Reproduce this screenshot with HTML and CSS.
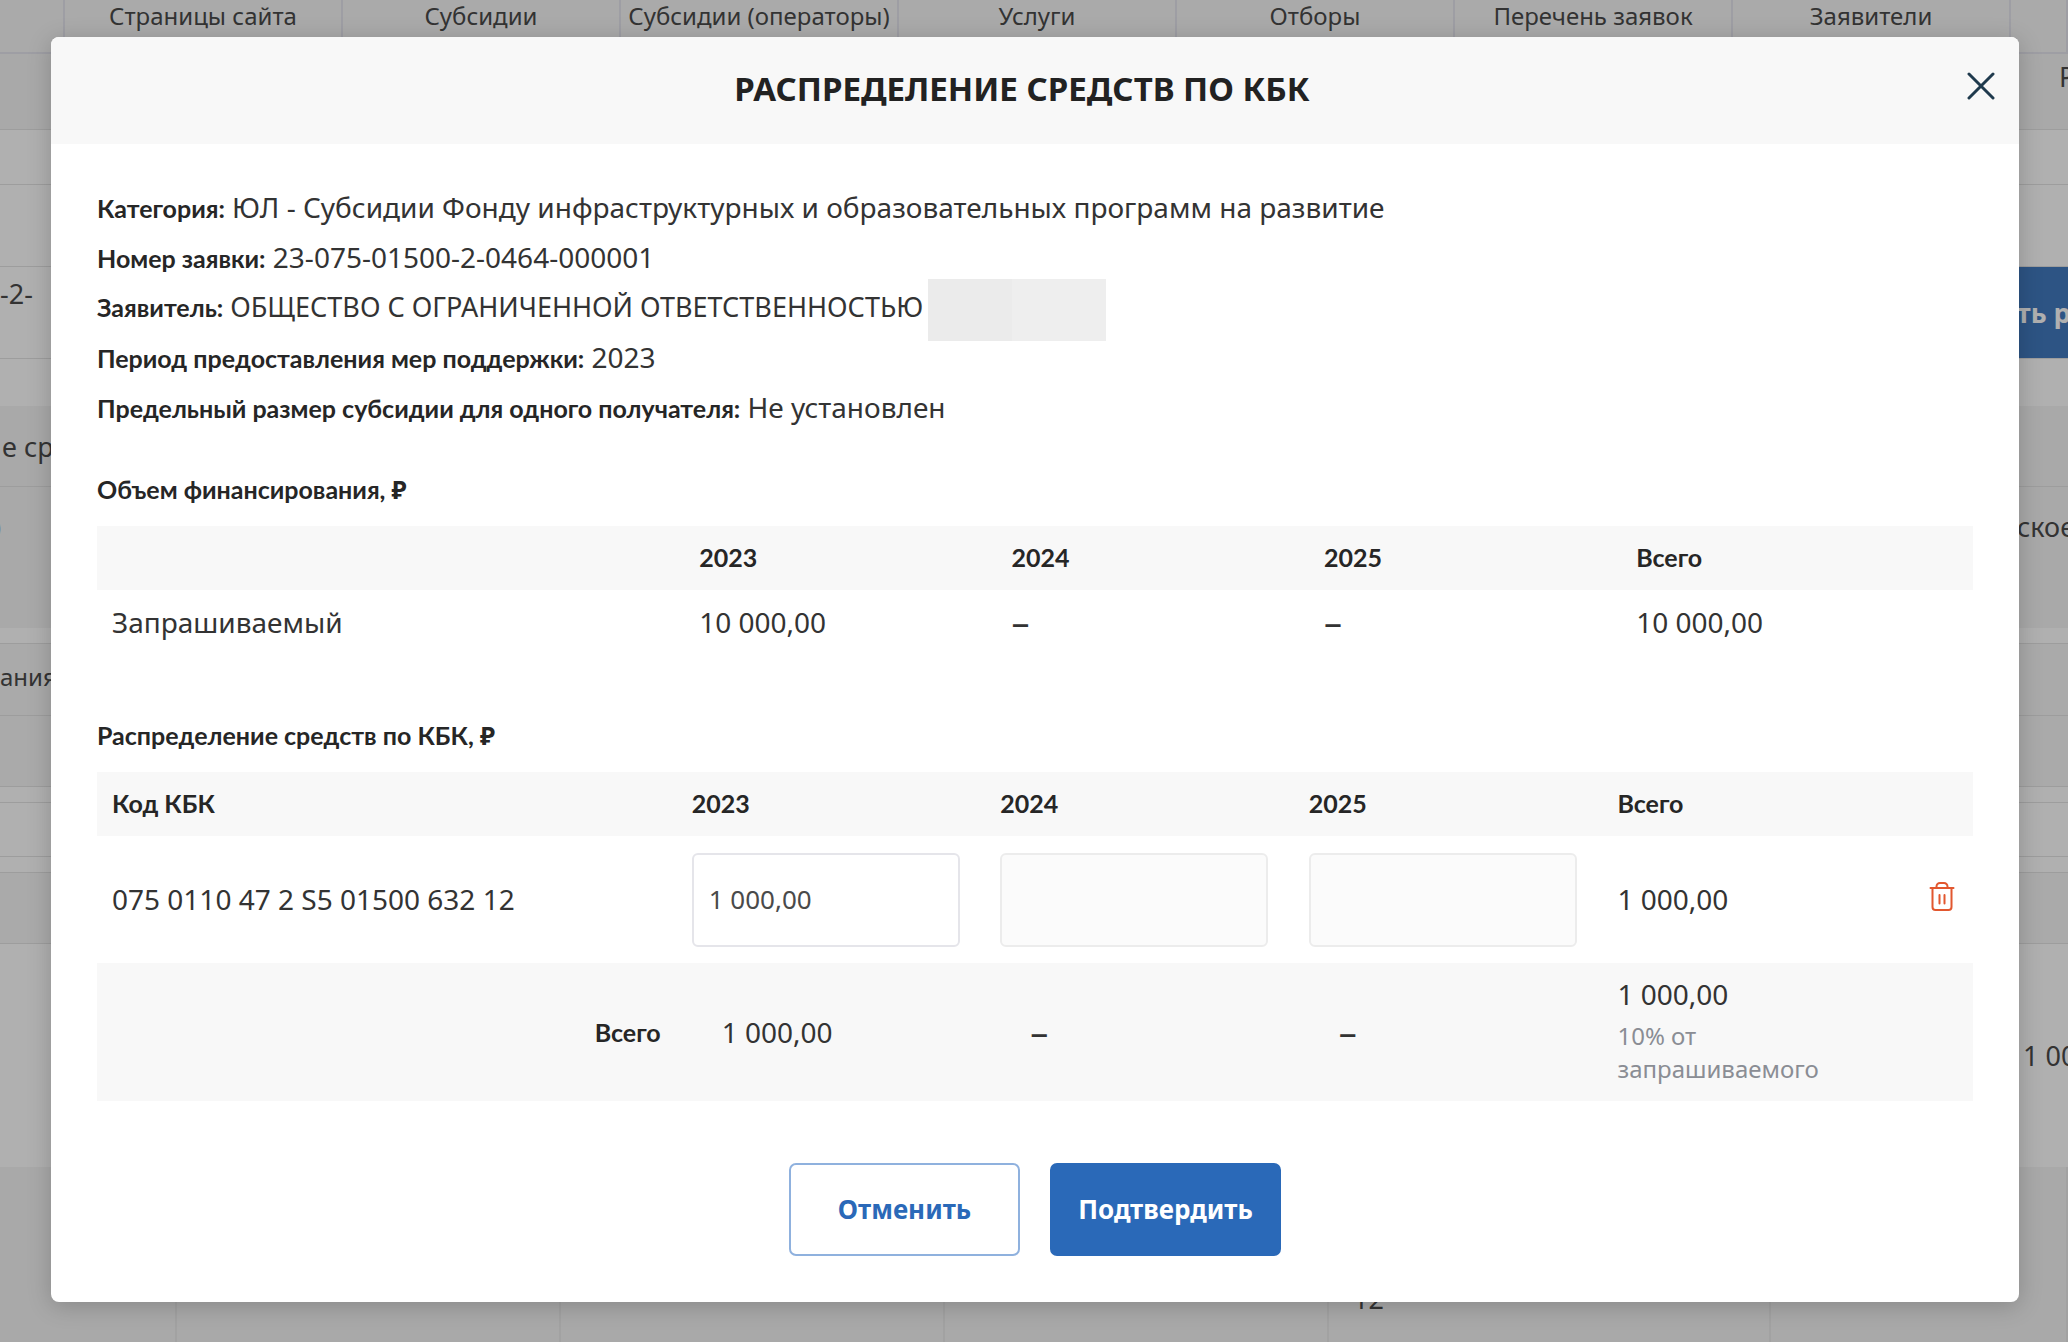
FILE: index.html
```html
<!DOCTYPE html>
<html lang="ru">
<head>
<meta charset="utf-8">
<meta name="viewport" content="width=device-width, initial-scale=1">
<title>Распределение средств по КБК</title>
<link rel="stylesheet" href="styles.css">
</head>
<body>
<div class="page" aria-hidden="true">
  <nav class="nav">
    <span class="nav-cell"></span>
    <span class="nav-cell">Страницы сайта</span>
    <span class="nav-cell">Субсидии</span>
    <span class="nav-cell">Субсидии (операторы)</span>
    <span class="nav-cell">Услуги</span>
    <span class="nav-cell">Отборы</span>
    <span class="nav-cell">Перечень заявок</span>
    <span class="nav-cell">Заявители</span>
    <span class="nav-cell"></span>
  </nav>
  <div class="band band-subnav"><span></span><span class="edge edge-far">Р</span></div>
  <div class="band band-thin"></div>
  <div class="band band-filter"></div>
  <div class="band band-record"><span class="cut">-2-</span><span class="edge edge-action">ть р</span></div>
  <div class="band band-gap"></div>
  <div class="band band-head"><span class="cut cut-in">е ср</span></div>
  <div class="band band-detail"><span class="cut cut-out">)</span><span class="edge">ское</span></div>
  <div class="band band-space"></div>
  <div class="band band-title"><span class="cut">ания</span></div>
  <div class="band band-sub"></div>
  <div class="band band-space"></div>
  <div class="band band-row"></div>
  <div class="band band-space"></div>
  <div class="band band-sub"></div>
  <div class="band band-sum"><span></span><span class="edge edge-in">1 00</span></div>
  <div class="foot">
    <span class="foot-cell"></span><span class="foot-cell"></span><span class="foot-cell"></span><span class="foot-cell"></span><span class="foot-cell">12</span><span class="foot-cell"></span>
  </div>
</div>

<div class="overlay">
  <section class="modal" role="dialog" aria-modal="true" aria-labelledby="modal-title">
    <header class="modal-head">
      <h1 class="modal-title" id="modal-title">РАСПРЕДЕЛЕНИЕ СРЕДСТВ ПО КБК</h1>
      <button class="icon-button close" type="button" aria-label="Закрыть">
        <svg width="28" height="28" viewBox="0 0 28 28" fill="none" stroke="#1f3a4d" stroke-width="3" stroke-linecap="round"><path d="M2 2 26 26M26 2 2 26"/></svg>
      </button>
    </header>

    <div class="modal-body">
      <div class="info">
        <p class="info-line"><b>Категория:</b> ЮЛ - Субсидии Фонду инфраструктурных и образовательных программ на развитие</p>
        <p class="info-line"><b>Номер заявки:</b> 23-075-01500-2-0464-000001</p>
        <p class="info-line info-flex"><span><b>Заявитель:</b> ОБЩЕСТВО С ОГРАНИЧЕННОЙ ОТВЕТСТВЕННОСТЬЮ</span><span class="redacted"></span></p>
        <p class="info-line"><b>Период предоставления мер поддержки:</b> 2023</p>
        <p class="info-line"><b>Предельный размер субсидии для одного получателя:</b> Не установлен</p>
      </div>

      <h2 class="section-title">Объем финансирования, ₽</h2>
      <table class="grid">
        <colgroup><col class="fund-name"><col class="fund-year"><col class="fund-year"><col class="fund-year"><col></colgroup>
        <thead><tr><td></td><th>2023</th><th>2024</th><th>2025</th><th>Всего</th></tr></thead>
        <tbody><tr><td>Запрашиваемый</td><td>10 000,00</td><td class="dash">–</td><td class="dash">–</td><td>10 000,00</td></tr></tbody>
      </table>

      <h2 class="section-title section-next">Распределение средств по КБК, ₽</h2>
      <table class="grid">
        <colgroup><col class="code-name"><col class="code-sum"><col class="code-sum"><col class="code-sum"><col class="code-sum"><col></colgroup>
        <thead><tr><th>Код КБК</th><th>2023</th><th>2024</th><th>2025</th><th>Всего</th><td></td></tr></thead>
        <tbody>
          <tr class="entry">
            <td>075 0110 47 2 S5 01500 632 12</td>
            <td><input class="amount" type="text" aria-label="Сумма на 2023" value="1 000,00"></td>
            <td><input class="amount" type="text" aria-label="Сумма на 2024" disabled></td>
            <td><input class="amount" type="text" aria-label="Сумма на 2025" disabled></td>
            <td>1 000,00</td>
            <td class="action">
              <button class="icon-button" type="button" aria-label="Удалить">
                <svg width="26" height="30" viewBox="0 0 26 30" fill="none" stroke="#e2572f" stroke-width="2" stroke-linecap="round" stroke-linejoin="round"><path d="M1.5 7h23M3.5 7v19a3 3 0 0 0 3 3h13a3 3 0 0 0 3-3V7M7.500 7V5.500A3.500 3.500 0 0 1 11 2h4a3.500 3.500 0 0 1 3.500 3.500V7M10.500 14v8.500M15.500 14v8.500"/></svg>
              </button>
            </td>
          </tr>
        </tbody>
        <tfoot>
          <tr>
            <th class="total-label">Всего</th>
            <td class="total">1 000,00</td>
            <td class="total dash">–</td>
            <td class="total dash">–</td>
            <td class="share">1 000,00<span class="note">10% от запрашиваемого</span></td>
            <td></td>
          </tr>
        </tfoot>
      </table>

      <div class="buttons">
        <button class="button" type="button">Отменить</button>
        <button class="button button-primary" type="button">Подтвердить</button>
      </div>
    </div>
  </section>
</div>
</body>
</html>
```
FILE: styles.css
```css
* { box-sizing: border-box; }

body {
  margin: 0;
  display: grid;
  min-height: 100vh;
  overflow: hidden;
  font-family: "Noto Sans", sans-serif;
  font-size: 28px;
  color: #333;
  background: #f3f3f3;
}

/* Page behind the dialog */
.page, .overlay { grid-area: 1 / 1; min-width: 0; }

.page { font-size: 24px; overflow: hidden; }

.nav {
  display: grid;
  grid-template-columns: 65px repeat(7, 278px) 1fr;
  height: 54px;
  background: #f6f6f6;
  border-bottom: 2px solid #e2e2ec;
}
.nav-cell {
  border-right: 2px solid #e2e2ec;
  line-height: 32px;
  text-align: center;
  white-space: nowrap;
}

.band {
  display: flex;
  justify-content: space-between;
  align-items: center;
  border-bottom: 1px solid #e0e0e0;
  background: #fff;
  font-size: 27px;
  white-space: nowrap;
}
.cut { width: 51px; }
.cut-in { padding-left: 2px; }
.cut-out { text-indent: -7px; }
.edge { width: 51px; }
.edge-far { padding-left: 42px; }
.edge-in { padding-left: 6px; }
.edge-action {
  align-self: stretch;
  line-height: 91px;
  font-weight: 700;
  color: #fff;
  background: #2a69b8;
}
.band-subnav { height: 76px; align-items: start; line-height: 46px; background: #f3f3f3; }
.band-thin { height: 55px; }
.band-filter { height: 82px; }
.band-record { height: 92px; line-height: 54px; align-items: start; }
.band-gap { height: 47px; border: 0; }
.band-head { height: 81px; background: #f3f3f3; }
.band-detail { height: 141px; border: 0; align-items: start; line-height: 80px; background: #f3f3f3; }
.band-space { height: 16px; }
.band-title { height: 72px; align-items: start; line-height: 66px; font-size: 24px; background: #f6f6f6; }
.band-sub { height: 71px; background: #f6f6f6; }
.band-row { height: 54px; }
.band-sum { height: 223px; border: 0; background: #fff; }

.foot { display: grid; grid-template-columns: 177px 384px 384px 384px 442px 1fr; height: 176px; }
.foot-cell { padding: 112px 24px 0; border-right: 2px solid #e8e8e8; font-size: 27px; line-height: 40px; }

/* Dialog */
.overlay {
  z-index: 1;
  display: flex;
  align-items: flex-start;
  padding: 37px 49px 40px 51px;
  background: rgba(51, 51, 51, 0.39);
}
.modal {
  flex: 1;
  min-width: 0;
  overflow: hidden;
  border-radius: 8px;
  background: #fff;
  box-shadow: 0 4px 24px rgba(0, 0, 0, 0.2);
}
.modal-head {
  display: grid;
  grid-template-columns: 60px 1fr 86px;
  align-items: center;
  height: 107px;
  padding-bottom: 4px;
  background: #f8f8f8;
}
.modal-title {
  grid-column: 2;
  margin: 0;
  font-size: 33px;
  line-height: 40px;
  text-align: center;
  color: #222;
}
.icon-button { display: block; padding: 0; border: 0; background: none; cursor: pointer; }
.icon-button svg { display: block; }
.close { margin-bottom: 5px; margin-left: 34px; }

.modal-body { padding: 38px 46px 46px; }

.info-line { margin: 0; line-height: 50px; }
.info-line b, .section-title, .grid th {
  font-family: Lato, "Noto Sans", sans-serif;
  font-size: 25px;
  font-weight: 700;
  color: #262626;
}
.info-line b { line-height: 1; }
.info-flex { display: flex; align-items: center; gap: 5px; height: 50px; font-size: 27px; }
.redacted {
  flex: none;
  width: 178px;
  height: 62px;
  margin-top: 5px;
  background: linear-gradient(to right, #ebebeb 47%, #eee 47%);
}

.section-title { margin: 39px 0 19px; line-height: 36px; }
.section-next { margin-top: 63px; }

.grid { width: 100%; table-layout: fixed; border-collapse: collapse; }
.grid th, .grid td { padding: 0 15px; line-height: 40px; text-align: left; }
.grid thead th { padding-bottom: 2px; }
.grid thead tr { height: 64px; background: #f8f8f8; }
.grid tbody tr { height: 64px; }
.fund-name { width: 31.3%; }
.fund-year { width: 16.65%; }
.code-name { width: 30.9%; }
.code-sum { width: 16.45%; }
.grid .dash { font-size: 36px; }

.grid .entry { height: 127px; }
.amount {
  display: block;
  width: 268px;
  max-width: 100%;
  height: 94px;
  padding: 0 15px 2px;
  border: 2px solid #e5e5ea;
  border-radius: 6px;
  background: #fff;
  font: inherit;
  font-size: 26px;
  color: #4a4a4a;
}
.amount:disabled { border-color: #ececec; background: #fbfbfb; }
.grid .entry td { padding-bottom: 2px; }
.grid .entry td:has(.amount) { padding: 0 0 0 15px; }
.grid .entry .action { padding: 0 0 8px 18px; }

.grid tfoot tr { height: 138px; background: #f8f8f8; }
.grid .total-label { padding-right: 16px; text-align: right; }
.grid .total { padding-left: 45px; }
.grid .share { padding-bottom: 5px; }
.note { display: block; margin-top: 5px; font-size: 24px; line-height: 33px; color: #8a8d94; }

.buttons { display: flex; justify-content: center; gap: 30px; margin-top: 62px; }
.button {
  width: 231px;
  height: 93px;
  padding: 0 0 2px;
  border: 2px solid #8fb1de;
  border-radius: 7px;
  background: #fff;
  font: 700 26px "Noto Sans", sans-serif;
  color: #2a69b8;
  cursor: pointer;
}
.button-primary { border-color: #2a69b8; background: #2a69b8; color: #fff; }
```
